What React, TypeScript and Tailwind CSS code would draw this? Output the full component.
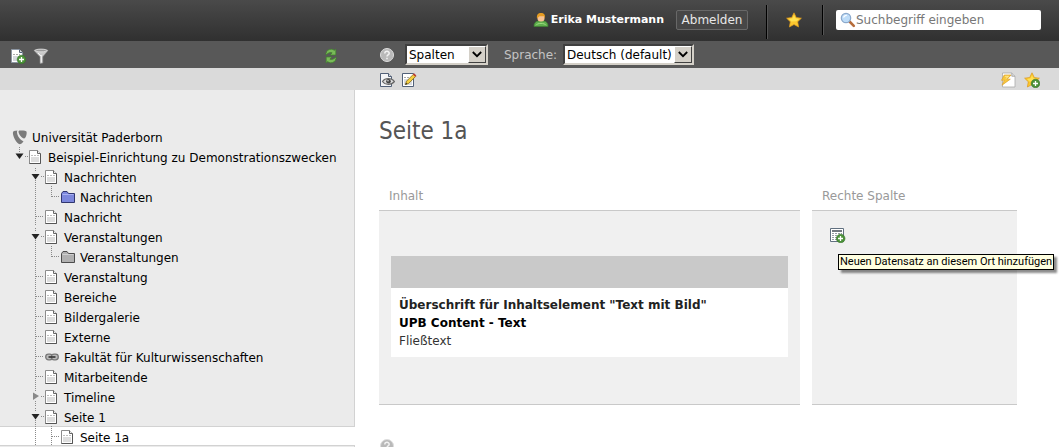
import React from "react";

type Guide = "blank" | "line" | "tee" | "end" | "open" | "openFirst" | "closed";
type IconKind = "root" | "page" | "folderBlue" | "folderGray" | "link";

interface TreeItem {
  label: string;
  icon: IconKind;
  guides: Guide[];
  active?: boolean;
}

const tree: TreeItem[] = [
  { label: "Universität Paderborn", icon: "root", guides: [] },
  { label: "Beispiel-Einrichtung zu Demonstrationszwecken", icon: "page", guides: ["openFirst"] },
  { label: "Nachrichten", icon: "page", guides: ["blank", "open"] },
  { label: "Nachrichten", icon: "folderBlue", guides: ["blank", "line", "end"] },
  { label: "Nachricht", icon: "page", guides: ["blank", "tee"] },
  { label: "Veranstaltungen", icon: "page", guides: ["blank", "open"] },
  { label: "Veranstaltungen", icon: "folderGray", guides: ["blank", "line", "end"] },
  { label: "Veranstaltung", icon: "page", guides: ["blank", "tee"] },
  { label: "Bereiche", icon: "page", guides: ["blank", "tee"] },
  { label: "Bildergalerie", icon: "page", guides: ["blank", "tee"] },
  { label: "Externe", icon: "page", guides: ["blank", "tee"] },
  { label: "Fakultät für Kulturwissenschaften", icon: "link", guides: ["blank", "tee"] },
  { label: "Mitarbeitende", icon: "page", guides: ["blank", "tee"] },
  { label: "Timeline", icon: "page", guides: ["blank", "closed"] },
  { label: "Seite 1", icon: "page", guides: ["blank", "open"] },
  { label: "Seite 1a", icon: "page", guides: ["blank", "line", "tee"], active: true },
];

function GuideCell({ kind }: { kind: Guide }) {
  const v = (y1: number, y2: number) => (
    <line x1="7.5" x2="7.5" y1={y1} y2={y2} stroke="#8a8a8a" strokeDasharray="1 1" />
  );
  const h = (x1: number) => (
    <line x1={x1} x2="16" y1="10.5" y2="10.5" stroke="#8a8a8a" strokeDasharray="1 1" />
  );
  return (
    <svg width="16" height="20" viewBox="0 0 16 20" className="shrink-0" aria-hidden="true">
      {kind === "line" && v(0, 20)}
      {kind === "tee" && <>{v(0, 20)}{h(8)}</>}
      {kind === "end" && <>{v(0, 11)}{h(8)}</>}
      {kind === "openFirst" && (
        <>{v(1, 6)}{h(13)}<path d="M3.500 7.500h8L7.500 13z" fill="#222" /></>
      )}
      {kind === "open" && (
        <>{v(2, 6)}{v(14, 20)}{h(13)}<path d="M3.500 8h8L7.500 13.500z" fill="#222" /></>
      )}
      {kind === "closed" && (
        <>{v(0, 5)}{v(15, 20)}{h(13)}<path d="M5 6.500l6 3.500-6 4z" fill="#888" /></>
      )}
    </svg>
  );
}

function TreeIcon({ kind }: { kind: IconKind }) {
  return (
    <svg width="16" height="16" viewBox="0 0 16 16" className="shrink-0" aria-hidden="true">
      {kind === "root" && (
        <g fill="#7b7b7b">
          <path d="M5.500 1.500C3.500 1.600 1.800 2 1.200 2.600c-.8 1.600.1 4.800 1.600 7.700 1.600 3 3.400 4.900 4.900 4.900 1.200 0 2.700-1.200 3.800-3C8.500 11.800 5 6.600 5 3.300c0-.8.1-1.300.5-1.800z" />
          <path d="M7.300 1.500c2.800-.2 7-.1 7.300 1.200.4 2.600-.9 6.700-2.500 6.700-2 0-5.600-4.200-5.600-6.600 0-.7.3-1.200.8-1.300z" />
        </g>
      )}
      {kind === "page" && (
        <>
          <path d="M1.500 1.500h8l3 3v10h-11z" fill="#fff" stroke="#8c8c8c" />
          <path d="M12.500 4.500v10h-11" fill="none" stroke="#555" />
          <path d="M9.500 1.500v3h3" fill="#eee" stroke="#666" />
          <path d="M3 8h8v5H3z" fill="#dedede" />
          <path d="M3 6.500h8" stroke="#bdbdbd" strokeDasharray="2 1" />
        </>
      )}
      {(kind === "folderBlue" || kind === "folderGray") && (
        <>
          <path
            d="M1.500 13.500v-9l1.500-2h4l1.500 2h6v9z"
            fill={kind === "folderBlue" ? "#7c87dc" : "#b0b0b0"}
            stroke={kind === "folderBlue" ? "#30366f" : "#4d4d4d"}
          />
          <path d="M2.500 5.500h11" stroke={kind === "folderBlue" ? "#a9b1f2" : "#d0d0d0"} />
        </>
      )}
      {kind === "link" && (
        <>
          <rect x="1.700" y="5.200" width="7" height="5.600" rx="2.800" fill="#bbb" stroke="#777" strokeWidth="1.300" />
          <rect x="7.300" y="5.200" width="7" height="5.600" rx="2.800" fill="#bbb" stroke="#777" strokeWidth="1.300" />
          <path d="M4.500 8h7" stroke="#333" strokeWidth="1.600" />
        </>
      )}
    </svg>
  );
}

function Plus() {
  return (
    <>
      <circle cx="11.500" cy="11.500" r="4.300" fill="#4b9139" stroke="#37732a" strokeWidth=".6" />
      <path d="M11.500 9v5M9 11.500h5" stroke="#fff" strokeWidth="1.300" />
    </>
  );
}

type ToolKind =
  | "newPage" | "filter" | "refresh" | "help" | "view" | "edit"
  | "cache" | "star" | "starAdd" | "user" | "search" | "newRecord";

const starPath = "M8 .8l2.300 4.700 5.100.7-3.700 3.600.9 5.200L8 12.500 3.400 15l.9-5.200L.6 6.200l5.100-.7z";

function ToolIcon({ kind }: { kind: ToolKind }) {
  return (
    <svg width="16" height="16" viewBox="0 0 16 16" className="block shrink-0" aria-hidden="true">
      {kind === "newPage" && (
        <>
          <path d="M1.500 1.500h8l3 3v10h-11z" fill="#fff" stroke="#8d96a3" />
          <path d="M9.500 1.500v3h3" fill="#ddd" stroke="#53627a" />
          <path d="M3 8h8v5H3z" fill="#d5d9df" />
          <path d="M3 6.500h7" stroke="#aaa" strokeDasharray="2 1" />
          <Plus />
        </>
      )}
      {kind === "filter" && (
        <>
          <path d="M1 2.500c2-2 12-2 14 0L9.800 8.800V15L7 15.500V8.800z" fill="#c9c9c9" stroke="#8f8f8f" strokeWidth=".6" />
          <ellipse cx="8" cy="2.500" rx="6" ry="1.300" fill="#9b9b9b" stroke="#e6e6e6" strokeWidth=".7" />
          <path d="M8.300 7v7.500M5 5l3 3" stroke="#f5f5f5" />
        </>
      )}
      {kind === "refresh" && (
        <g fill="#79ba59" stroke="#3f8429" strokeWidth=".7">
          <path d="M3 7V5.500C3.500 2.500 5.800 1.100 8.500 1.200c1.200.1 2.100.5 2.800 1.200L12.800 1v6H7.200l1.900-2.200C7 4 5 4.800 3 7z" />
          <path d="M13 9v1.500c-.5 3-2.800 4.400-5.500 4.300-1.200-.1-2.100-.5-2.800-1.200L3.200 15V9h5.600l-1.900 2.200C9 12 11 11.200 13 9z" />
        </g>
      )}
      {kind === "help" && (
        <>
          <circle cx="8" cy="8" r="6.500" fill="#b9b9b9" stroke="#dedede" />
          <path d="M5.800 6.500C5.800 3.600 10.200 3.700 10.200 6.200 10.200 7.800 8 7.800 8 9.500M8 10.800v1.500" fill="none" stroke="#f2f2f2" strokeWidth="1.500" />
        </>
      )}
      {kind === "view" && (
        <>
          <path d="M1.500 1.500h8l3 3v10h-11z" fill="#f4f5f7" stroke="#526178" />
          <path d="M9.500 1.500v3h3" fill="#ddd" stroke="#526178" />
          <path d="M3.500 9.500C6 5.500 12.500 5.500 15.500 9.500 12.500 13.200 6 13.200 3.500 9.500z" fill="#dcdcdc" stroke="#666" strokeWidth="1.200" />
          <circle cx="9.500" cy="9.200" r="2.300" fill="#444" />
          <circle cx="9" cy="8.700" r=".7" fill="#fff" />
        </>
      )}
      {kind === "edit" && (
        <>
          <path d="M1.500 1.500h11v13h-11z" fill="#fff" stroke="#526178" />
          <path d="M3 7h8v6H3z" fill="#d9dce1" />
          <path d="M3 5.500h6" stroke="#aaa" strokeDasharray="2 1" />
          <path d="M4.500 12.500l1-3.300 7-7 2.200 2.200-7 7z" fill="#f5cf3f" stroke="#826713" strokeWidth=".8" />
          <path d="M11.800 2.500l1.300-1.300 2.300 2.300L14.100 4.800z" fill="#bd3f37" />
          <path d="M4.300 12.700l.8-1.900 1.100 1.100z" fill="#222" />
        </>
      )}
      {kind === "cache" && (
        <>
          <path d="M2.500 1h9.300l3.200 3.200V15H2.500z" fill="#fff" stroke="#aaa" strokeWidth=".8" />
          <path d="M11.800 1v3.200H15" fill="#ddd" stroke="#999" strokeWidth=".8" />
          <path d="M4.200 3L1.500 8.300h2.800L2 13.200l8.300-6H7.200L11 3z" fill="#f6c73e" stroke="#dda02b" strokeWidth=".7" />
          <path d="M5 4.300h3.500L5.800 6.500" fill="none" stroke="#fff0a0" strokeWidth=".8" />
        </>
      )}
      {(kind === "star" || kind === "starAdd") && (
        <>
          <path d={starPath} fill="#fbc72f" stroke="#dd9a1d" strokeWidth=".7" strokeLinejoin="round" />
          <path d="M8 3l1.400 3.300 3.600.6-2.700 2.300-4.800.2L3 6.900l3.600-.6z" fill="#ffe152" />
          {kind === "starAdd" && <Plus />}
        </>
      )}
      {kind === "user" && (
        <>
          <path d="M1 14.500c-.2-3.300 1.500-5 4-5.500h6c2.500.5 4.200 2.200 4 5.500z" fill="#5fae4d" stroke="#3d8131" strokeWidth=".7" />
          <path d="M3 13.300c1-2.500 9-2.500 10 0" fill="none" stroke="#9bdb80" />
          <rect x="4.500" y="2.500" width="7" height="7" rx="3" fill="#f6c293" />
          <path d="M4 6.500C3.500 2.800 5 1 8 1s4.500 1.800 4 5.500l-1-2.300H6.500z" fill="#e59b22" />
        </>
      )}
      {kind === "search" && (
        <>
          <path d="M9.500 9.500l4.300 4.300" stroke="#b66c3a" strokeWidth="2.600" strokeLinecap="round" />
          <circle cx="6" cy="6" r="4.700" fill="#bddcf8" stroke="#8ba9cc" strokeWidth="1.200" />
          <path d="M3.500 5.500C4 3.800 5.200 3.200 6.800 3.300" fill="none" stroke="#fff" strokeWidth="1.300" />
        </>
      )}
      {kind === "newRecord" && (
        <>
          <path d="M.5 1.500h13v13H.5z" fill="#fff" stroke="#617080" />
          <path d="M2 4h10" stroke="#4f5861" strokeWidth="1.600" />
          <path d="M2 6.500h10M2 8.500h10M2 10.500h10M2 12.500h10" stroke="#969da5" strokeDasharray="2 1" />
          <circle cx="10.700" cy="11.500" r="4.300" fill="#4b9139" stroke="#37732a" strokeWidth=".6" />
          <path d="M10.500 9v5M8 11.500h5" stroke="#fff" strokeWidth="1.300" />
        </>
      )}
    </svg>
  );
}

function IconButton({ kind, label }: { kind: ToolKind; label: string }) {
  return (
    <button type="button" aria-label={label} className="shrink-0">
      <ToolIcon kind={kind} />
    </button>
  );
}

function Select({ id, label, value, width }: { id: string; label?: string; value: string; width: string }) {
  return (
    <div className={`relative h-[21px] ${width}`}>
      <select
        id={id}
        aria-label={label}
        className="block h-full w-full appearance-none border-2 border-t-[#404040] border-r-[#d4d0c8] border-b-[#d4d0c8] border-l-[#404040] bg-white pl-0.5 text-xs leading-4 text-black"
      >
        <option>{value}</option>
      </select>
      <span className="pointer-events-none absolute top-0.5 right-0.5 flex h-[17px] w-[18px] items-center justify-center border border-t-white border-r-[#404040] border-b-[#404040] border-l-white bg-[#d4d0c8]">
        <svg width="10" height="7" viewBox="0 0 10 7" aria-hidden="true">
          <path d="M.8 1L5 5.200 9.200 1" fill="none" stroke="#000" strokeWidth="1.800" />
        </svg>
      </span>
    </div>
  );
}

export default function App() {
  return (
    <div className="flex h-screen flex-col overflow-hidden bg-white font-['DejaVu_Sans',Verdana,sans-serif] text-xs text-black">
      <header className="flex h-[41px] shrink-0 items-start justify-end bg-linear-to-b from-[#4a4a4a] to-[#303030] pr-[18px]">
        <div className="flex h-10 items-center gap-3">
          <span className="flex items-center gap-0.5 text-[11px] font-bold text-white">
            <ToolIcon kind="user" />
            Erika Mustermann
          </span>
          <button type="button" className="h-5 w-[72px] rounded-xs border border-[#686868] bg-[#474747] text-xs leading-4 text-[#e8e8e8]">
            Abmelden
          </button>
        </div>
        <div className="mt-[5px] ml-[18px] h-[34px] w-0.5 border-r border-[#555] bg-black" />
        <div className="flex h-10 w-[54px] items-center justify-center pr-0.5">
          <IconButton kind="star" label="Lesezeichen" />
        </div>
        <div className="mt-[5px] h-[30px] w-0.5 border-r border-[#555] bg-black" />
        <label className="mt-2.5 ml-3 flex h-5 w-[205px] items-center rounded-xs bg-white pl-1">
          <ToolIcon kind="search" />
          <input
            type="text"
            aria-label="Suche"
            placeholder="Suchbegriff eingeben"
            className="h-5 min-w-0 flex-1 bg-transparent text-xs text-[#333] outline-none placeholder:text-[#777]"
          />
        </label>
      </header>

      <div className="flex h-[27px] shrink-0 items-center bg-[#585858]">
        <div className="flex w-[355px] shrink-0 items-center pt-0.5 pr-4 pl-2.5">
          <IconButton kind="newPage" label="Neue Seite" />
          <span className="w-[7px]" />
          <IconButton kind="filter" label="Filter" />
          <span className="flex-1" />
          <IconButton kind="refresh" label="Aktualisieren" />
        </div>
        <div className="flex items-center pl-6">
          <IconButton kind="help" label="Hilfe" />
          <span className="w-2.5" />
          <Select id="view-mode" label="Ansicht" value="Spalten" width="w-[83px]" />
          <label htmlFor="language" className="ml-4 w-[59px] text-[#c4c4c4]">
            Sprache:
          </label>
          <Select id="language" value="Deutsch (default)" width="w-[131px]" />
        </div>
      </div>

      <div className="flex h-[22px] shrink-0 items-center justify-between bg-[#dadada] pt-0.5 pr-[19px] pl-[379px]">
        <div className="flex gap-1.5">
          <IconButton kind="view" label="Anzeigen" />
          <IconButton kind="edit" label="Bearbeiten" />
        </div>
        <div className="flex gap-2">
          <IconButton kind="cache" label="Cache leeren" />
          <IconButton kind="starAdd" label="Lesezeichen hinzufügen" />
        </div>
      </div>

      <div className="flex min-h-0 flex-1">
        <nav className="w-[355px] shrink-0 overflow-hidden bg-[#ebebeb] pt-9 shadow-[inset_-1px_0_0_#d2d2d2]">
          <ul>
            {tree.map((item, i) => (
              <li
                key={i}
                className={
                  item.active
                    ? "flex h-5 items-center bg-white pl-3 shadow-[inset_0_1px_0_#d2d2d2,inset_0_-1px_0_#d2d2d2]"
                    : "flex h-5 items-center pl-3"
                }
              >
                {item.guides.map((g, k) => (
                  <GuideCell key={k} kind={g} />
                ))}
                <span className="flex h-5 shrink-0 items-end pb-px">
                  <TreeIcon kind={item.icon} />
                </span>
                <a href="#" className="pt-1 pl-1 leading-4 whitespace-nowrap">
                  {item.label}
                </a>
              </li>
            ))}
          </ul>
        </nav>

        <main className="min-w-0 flex-1 overflow-hidden pt-[25px] pr-[42px] pl-6">
          <h1 className="h-8 font-['DejaVu_Sans_Condensed',sans-serif] text-2xl leading-8 text-[#555]">Seite 1a</h1>
          <div className="mt-[39px] flex gap-3">
            <section className="flex min-w-0 flex-1 flex-col">
              <h2 className="h-6 pl-2.5 leading-5 text-[#999]">Inhalt</h2>
              <div className="h-[195px] border-y border-[#c9c9c9] bg-[#f0f0f0] px-3 pt-[45px]">
                <article className="bg-white">
                  <div className="h-8 bg-[#c9c9c9]" />
                  <div className="px-2 pt-2 pb-[7px] leading-[18px] text-[#333]">
                    <p className="font-bold text-[#222]">Überschrift für Inhaltselement "Text mit Bild"</p>
                    <p className="font-bold text-black">UPB Content - Text</p>
                    <p>Fließtext</p>
                  </div>
                </article>
              </div>
            </section>
            <section className="flex w-[205px] shrink-0 flex-col">
              <h2 className="h-6 pl-2.5 leading-5 text-[#999]">Rechte Spalte</h2>
              <div className="h-[195px] border-y border-[#c9c9c9] bg-[#f0f0f0] px-[18px] pt-4">
                <div className="relative w-4">
                  <IconButton kind="newRecord" label="Neuen Datensatz hinzufügen" />
                  <div
                    role="tooltip"
                    className="absolute top-[27px] left-2 h-4 border border-black bg-[#ffffe1] px-px font-[Roboto,sans-serif] text-[11px] leading-[14px] whitespace-nowrap shadow-[3px_3px_2px_rgba(0,0,0,0.45)]"
                  >
                    Neuen Datensatz an diesem Ort hinzufügen
                  </div>
                </div>
              </div>
            </section>
          </div>
          <div className="mt-[33px]">
            <IconButton kind="help" label="Hilfe" />
          </div>
        </main>
      </div>
    </div>
  );
}
